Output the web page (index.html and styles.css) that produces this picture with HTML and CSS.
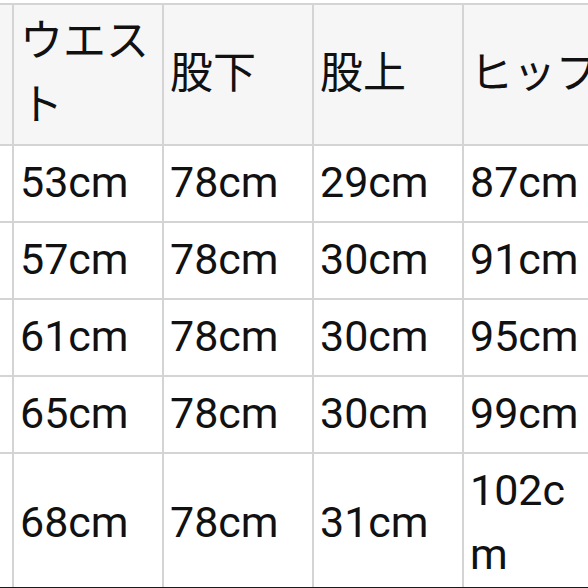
FILE: index.html
```html
<!DOCTYPE html>
<html lang="ja">
<head>
<meta charset="utf-8">
<title>サイズ表</title>
<link rel="stylesheet" href="styles.css">
</head>
<body>
<div class="frame">
  <table class="size-table">
    <thead>
      <tr>
        <th class="cut"></th>
        <th>ウエスト</th>
        <th>股下</th>
        <th>股上</th>
        <th>ヒップ</th>
      </tr>
    </thead>
    <tbody>
      <tr><td class="cut"></td><td>53cm</td><td>78cm</td><td>29cm</td><td>87cm</td></tr>
      <tr><td class="cut"></td><td>57cm</td><td>78cm</td><td>30cm</td><td>91cm</td></tr>
      <tr><td class="cut"></td><td>61cm</td><td>78cm</td><td>30cm</td><td>95cm</td></tr>
      <tr><td class="cut"></td><td>65cm</td><td>78cm</td><td>30cm</td><td>99cm</td></tr>
      <tr><td class="cut"></td><td>68cm</td><td>78cm</td><td>31cm</td><td>102cm</td></tr>
    </tbody>
  </table>
</div>
</body>
</html>
```
FILE: styles.css
```css
html, body {
  margin: 0;
  padding: 0;
  background: #ffffff;
}
.frame {
  width: 588px;
  height: 588px;
  overflow: hidden;
  border-bottom: 1px solid #1a1a1a;
  padding-top: 3px;
  box-sizing: border-box;
}
.size-table {
  border-collapse: collapse;
  table-layout: fixed;
  width: 750px;
  margin-left: -138px;
  font-family: Roboto, "Noto Sans CJK JP", sans-serif;
  font-size: 43px;
  line-height: 64px;
  color: #111111;
}
.size-table th,
.size-table td {
  width: 130px;
  border: 2px solid #d4d4d4;
  padding: 4px 12px 7px 6px;
  text-align: left;
  vertical-align: middle;
  word-break: break-all;
  font-weight: normal;
}
.size-table th {
  background: #f6f6f6;
}
.size-table td {
  background: #ffffff;
}
```
